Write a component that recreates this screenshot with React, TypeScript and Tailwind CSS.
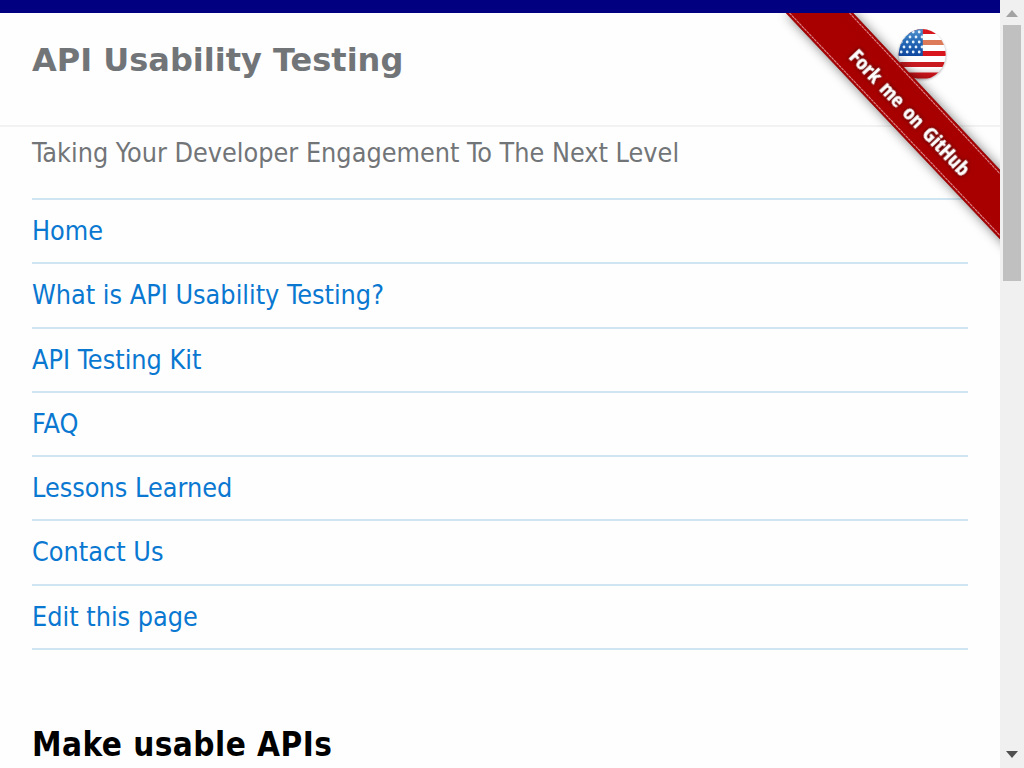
const links = [
  "Home",
  "What is API Usability Testing?",
  "API Testing Kit",
  "FAQ",
  "Lessons Learned",
  "Contact Us",
  "Edit this page",
];

const starRows = [19, 24, 29, 34, 39];

function Flag() {
  return (
    <g>
      <defs>
        <clipPath id="flag-clip">
          <ellipse cx="142.2" cy="41.3" rx="23.5" ry="25.2" />
        </clipPath>
        <linearGradient id="canton" x1="0" y1="0" x2="0" y2="1">
          <stop offset="0" stopColor="#5597d0" />
          <stop offset="0.5" stopColor="#2468b5" />
          <stop offset="1" stopColor="#1048a0" />
        </linearGradient>
        <linearGradient id="base" x1="0" y1="0" x2="0" y2="1">
          <stop offset="0.75" stopColor="#550000" stopOpacity="0" />
          <stop offset="1" stopColor="#550000" stopOpacity="0.35" />
        </linearGradient>
      </defs>
      <ellipse cx="142.2" cy="42.3" rx="24" ry="25" fill="#000" opacity="0.25" filter="url(#soft)" />
      <g clipPath="url(#flag-clip)">
        <rect x="118" y="15" width="50" height="53" fill="#fff" />
        <g fill="#d8161d">
          <rect x="118" y="15" width="50" height="6" />
          <rect x="118" y="27" width="50" height="5" fill="#dc7a5a" />
          <rect x="118" y="38" width="50" height="5" />
          <rect x="118" y="49" width="50" height="5" fill="#c91a20" />
          <rect x="118" y="59.5" width="50" height="6" />
        </g>
        <rect x="118" y="15" width="24.8" height="28" fill="url(#canton)" />
        <g fill="#e4f0fb">
          {starRows.map((y, row) =>
            [0, 1, 2, 3].map((col) => (
              <circle key={`${row}-${col}`} cx={(row % 2 ? 124 : 121.2) + col * 6} cy={y} r="1.4" />
            )),
          )}
        </g>
        <rect x="118" y="15" width="50" height="53" fill="url(#base)" />
      </g>
    </g>
  );
}

function Ribbon() {
  return (
    <svg className="absolute right-0 top-[13px] h-[260px] w-[240px] overflow-hidden" viewBox="-20 0 240 260" aria-label="Fork me on GitHub">
      <defs>
        <filter id="soft" x="-20%" y="-20%" width="140%" height="140%">
          <feGaussianBlur stdDeviation="1" />
        </filter>
        <filter id="shade" x="-20%" y="-20%" width="140%" height="140%">
          <feGaussianBlur stdDeviation="6" />
        </filter>
        <linearGradient id="red" x1="0" y1="1" x2="0.9" y2="0">
          <stop offset="0" stopColor="#a00" />
          <stop offset="1" stopColor="#a60000" />
        </linearGradient>
      </defs>
      <Flag />
      <path d="M6 0 L73 0 L240 178 L240 247 Z" fill="#000" opacity="0.5" filter="url(#shade)" />
      <path d="M6 0 L73 0 L220 157 L220 226 Z" fill="url(#red)" />
      <g stroke="#800" strokeOpacity="0.6" strokeWidth="1">
        <path d="M6 0 L220 226" />
        <path d="M73 0 L220 157" />
      </g>
      <g stroke="#dc8589" strokeWidth="1.1" strokeDasharray="3 0.6">
        <path d="M9.5 0 L220 222.5" />
        <path d="M69.5 0 L220 160.7" />
      </g>
      <g transform="translate(68 44.5) rotate(46.6)">
        <text
          x="0"
          y="0"
          textLength="165"
          lengthAdjust="spacingAndGlyphs"
          className="fill-white stroke-white stroke-[0.4px] text-[19.5px] font-bold [word-spacing:3px] [font-family:'Open_Sans','Noto_Sans',sans-serif] [filter:drop-shadow(0_0_2px_#400)]"
        >
          Fork me on GitHub
        </text>
      </g>
    </svg>
  );
}

function Scrollbar() {
  return (
    <div className="flex h-full w-6 shrink-0 flex-col items-center bg-[#f0f0f0]">
      <svg className="h-[25px] w-6 shrink-0" viewBox="0 0 24 25">
        <path d="M6 17 L12 10 L18 17 Z" fill="#a3a3a3" />
      </svg>
      <div className="h-64 w-[18px] bg-[#c0c0c0]" />
      <svg className="mt-auto h-[27px] w-6 shrink-0" viewBox="0 0 24 27">
        <path d="M6 10 L12 17 L18 10 Z" fill="#505050" />
      </svg>
    </div>
  );
}

export default function App() {
  return (
    <div className="flex h-screen w-full overflow-hidden bg-[#fefefe] text-[26.75px] leading-10 whitespace-nowrap [font-family:'DejaVu_Sans_Condensed','DejaVu_Sans',sans-serif] [font-stretch:condensed]">
      <div className="relative min-w-0 flex-1 overflow-hidden">
        <div className="h-[13px] bg-[#000080]" />
        <header className="h-[114px] border-b-2 border-[#f2f2f2] px-8 pt-[27px] text-[#727578]">
          <h1 className="text-[32px] leading-10 font-bold [font-family:'DejaVu_Sans',sans-serif] [font-stretch:normal]">API Usability Testing</h1>
        </header>
        <nav className="px-8 pt-[6px]">
          <p className="h-[65px] text-[#727578]">Taking Your Developer Engagement To The Next Level</p>
          <ul className="border-t-2 border-[#d0e5f2]">
            {links.map((label) => (
              <li key={label} className="h-[64.25px] border-b-2 border-[#d0e5f2] pt-[11px] text-[#0a78d1]">
                <a href="#">{label}</a>
              </li>
            ))}
          </ul>
        </nav>
        <h2 className="px-8 pt-[75px] text-[33px] leading-10 font-bold tracking-[0.45px] text-black">Make usable APIs</h2>
        <Ribbon />
      </div>
      <Scrollbar />
    </div>
  );
}
